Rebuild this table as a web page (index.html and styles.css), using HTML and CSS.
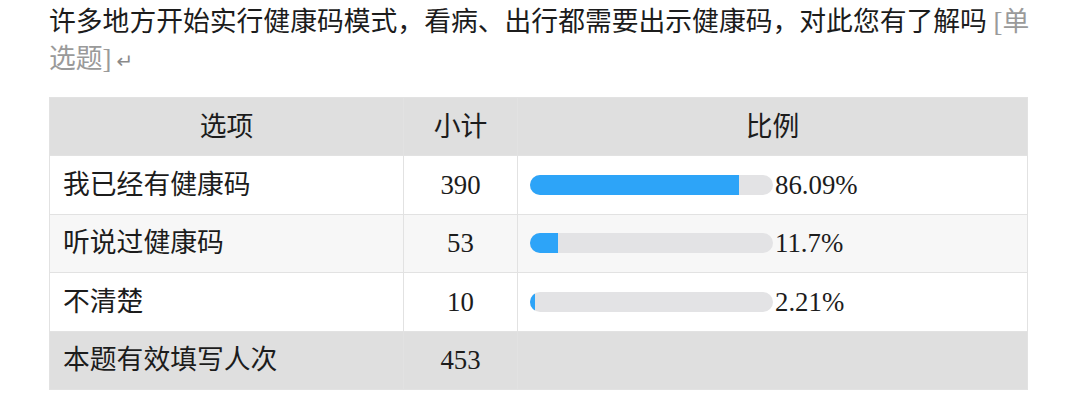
FILE: index.html
```html
<!DOCTYPE html>
<html lang="zh-CN">
<head>
<meta charset="utf-8">
<title>健康码调查</title>
<link rel="stylesheet" href="styles.css">
</head>
<body>
<div class="page">
  <p class="question">许多地方开始实行健康码模式，看病、出行都需要出示健康码，对此您有了解吗&nbsp;<span class="qtype">[单选题]</span><span class="ret">↵</span></p>
  <table class="stats">
    <colgroup>
      <col class="c-opt">
      <col class="c-cnt">
      <col class="c-pct">
    </colgroup>
    <thead>
      <tr class="head">
        <th>选项</th>
        <th>小计</th>
        <th>比例</th>
      </tr>
    </thead>
    <tbody>
      <tr>
        <td class="opt">我已经有健康码</td>
        <td class="cnt">390</td>
        <td class="pct"><div class="barwrap"><div class="track"><div class="fill" style="width:86.09%"></div></div><span class="val">86.09%</span></div></td>
      </tr>
      <tr class="alt">
        <td class="opt">听说过健康码</td>
        <td class="cnt">53</td>
        <td class="pct"><div class="barwrap"><div class="track"><div class="fill" style="width:11.7%"></div></div><span class="val">11.7%</span></div></td>
      </tr>
      <tr>
        <td class="opt">不清楚</td>
        <td class="cnt">10</td>
        <td class="pct"><div class="barwrap"><div class="track"><div class="fill" style="width:2.21%"></div></div><span class="val">2.21%</span></div></td>
      </tr>
      <tr class="total">
        <td class="opt">本题有效填写人次</td>
        <td class="cnt">453</td>
        <td class="pct"></td>
      </tr>
    </tbody>
  </table>
</div>
</body>
</html>
```
FILE: styles.css
```css
html, body {
  margin: 0;
  padding: 0;
  background: #ffffff;
}

body {
  font-family: "Liberation Serif", "Noto Sans CJK SC", serif;
  font-size: 26.8px;
  color: #1c1c1c;
}

.page {
  padding: 4px 0 0 49px;
}

.question {
  margin: 0;
  width: 995px;
  line-height: 37px;
  font-size: 26.8px;
  color: #1c1c1c;
}

.qtype {
  color: #9a9a9a;
}

.ret {
  color: #8a8a8a;
  font-family: "DejaVu Sans", sans-serif;
  font-size: 20px;
  line-height: 20px;
  margin-left: 5px;
}

.stats {
  margin-top: 19px;
  width: 978px;
  table-layout: fixed;
  border-collapse: collapse;
  font-size: 26.8px;
}

.c-opt { width: 354px; }
.c-cnt { width: 114px; }
.c-pct { width: 510px; }

.stats th,
.stats td {
  border: 1px solid #e2e2e2;
  height: 57.4px;
  padding: 0;
  vertical-align: middle;
  font-weight: normal;
  line-height: 30px;
}

.head th {
  background: #dfdfdf;
  text-align: center;
  color: #1c1c1c;
}

.stats td.opt {
  padding-left: 13px;
  text-align: left;
}

.stats td.cnt {
  text-align: center;
}

.stats td.pct {
  padding-left: 12px;
}

.alt td {
  background: #f7f7f7;
}

.total td {
  background: #dfdfdf;
}

.barwrap {
  display: flex;
  align-items: center;
}

.track {
  width: 243px;
  height: 20px;
  border-radius: 10px;
  background: #e3e3e5;
  overflow: hidden;
  flex: none;
}

.fill {
  height: 100%;
  background: #2da4f8;
}

.val {
  margin-left: 2px;
  line-height: 30px;
}
```
